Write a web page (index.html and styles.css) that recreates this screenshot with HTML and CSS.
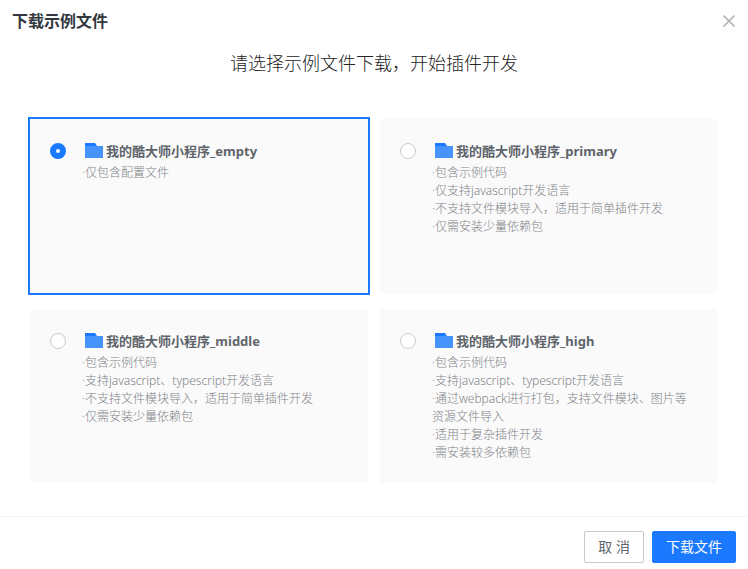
FILE: index.html
```html
<!DOCTYPE html>
<html lang="zh-CN">
<head>
    <meta charset="UTF-8">
    <meta name="viewport" content="width=device-width, initial-scale=1.0">
    <title>下载示例文件</title>
    <link rel="stylesheet" href="styles.css">
</head>
<body>

    <svg class="sprite" aria-hidden="true">
        <symbol id="folder" viewBox="0 0 18 16">
            <path fill="#1a79ff" d="M0 0h10l2 3v4H0z"/>
            <path fill="#4793fc" d="M0 3h18v12H0z"/>
        </symbol>
    </svg>

    <form class="dialog">
        <div class="dialog-header">
            <h1>下载示例文件</h1>
            <button type="button" class="close-btn" aria-label="关闭">
                <svg width="12" height="12" viewBox="0 0 12 12" aria-hidden="true">
                    <path d="M1 1l10 10M11 1L1 11" fill="none" stroke="#acb1b6" stroke-width="1.6" stroke-linecap="round"/>
                </svg>
            </button>
        </div>

        <h2 class="subtitle">请选择示例文件下载，开始插件开发</h2>

        <!-- Sample file options -->
        <div class="options">
            <label class="option">
                <input type="radio" name="sample" value="empty" checked>
                <span class="option-body">
                    <span class="option-title"><svg class="folder" aria-hidden="true"><use href="#folder"/></svg>我的酷大师小程序_empty</span>
                    <span class="line">·仅包含配置文件</span>
                </span>
            </label>

            <label class="option">
                <input type="radio" name="sample" value="primary">
                <span class="option-body">
                    <span class="option-title"><svg class="folder" aria-hidden="true"><use href="#folder"/></svg>我的酷大师小程序_primary</span>
                    <span class="line">·包含示例代码</span>
                    <span class="line">·仅支持javascript开发语言</span>
                    <span class="line">·不支持文件模块导入，适用于简单插件开发</span>
                    <span class="line">·仅需安装少量依赖包</span>
                </span>
            </label>

            <label class="option">
                <input type="radio" name="sample" value="middle">
                <span class="option-body">
                    <span class="option-title"><svg class="folder" aria-hidden="true"><use href="#folder"/></svg>我的酷大师小程序_middle</span>
                    <span class="line">·包含示例代码</span>
                    <span class="line">·支持javascript、typescript开发语言</span>
                    <span class="line">·不支持文件模块导入，适用于简单插件开发</span>
                    <span class="line">·仅需安装少量依赖包</span>
                </span>
            </label>

            <label class="option">
                <input type="radio" name="sample" value="high">
                <span class="option-body">
                    <span class="option-title"><svg class="folder" aria-hidden="true"><use href="#folder"/></svg>我的酷大师小程序_high</span>
                    <span class="line">·包含示例代码</span>
                    <span class="line">·支持javascript、typescript开发语言</span>
                    <span class="line">·通过webpack进行打包，支持文件模块、图片等资源文件导入</span>
                    <span class="line">·适用于复杂插件开发</span>
                    <span class="line">·需安装较多依赖包</span>
                </span>
            </label>
        </div>

        <div class="dialog-footer">
            <button type="button" class="btn">取 消</button>
            <button type="submit" class="btn btn-primary">下载文件</button>
        </div>
    </form>

</body>
</html>
```
FILE: styles.css
```css
* {
    box-sizing: border-box;
}
body {
    margin: 0;
    background-color: white;
    font-family: "Noto Sans", "Noto Sans CJK SC", sans-serif;
    color: #33383e;
}
.sprite {
    display: none;
}
.dialog {
    display: flex;
    flex-direction: column;
    min-height: 100vh;
}
.dialog-header {
    display: flex;
    align-items: center;
    justify-content: space-between;
    height: 42px;
    padding: 0 13px 0 12px;
}
.dialog-header h1 {
    margin: 0;
    font-size: 16px;
    line-height: 24px;
}
.close-btn {
    display: flex;
    padding: 0;
    border: none;
    background: none;
    cursor: pointer;
}
.subtitle {
    margin: 7px 0 0;
    font-size: 18px;
    font-weight: 300;
    line-height: 28px;
    text-align: center;
    color: #222;
}
.options {
    display: grid;
    grid-template-columns: 1fr 1fr;
    gap: 16px 12px;
    padding: 42px 30px 33px;
}
.option {
    display: flex;
    align-items: flex-start;
    gap: 16px;
    min-height: 174px;
    padding: 20px;
    border-radius: 4px;
    background-color: #fafafa;
    cursor: pointer;
}
.option:has(input:checked) {
    border-radius: 0;
    box-shadow: 0 0 0 2px #1a79ff;
}
.option input {
    appearance: none;
    flex: none;
    width: 16px;
    height: 16px;
    margin: 4px 0;
    border: 1px solid #c8cacf;
    border-radius: 50%;
    background-color: white;
}
.option input:checked {
    border: 6px solid #1a79ff;
}
.option-body {
    flex: 1;
    font-size: 12px;
    font-weight: 300;
    line-height: 18px;
    color: #808388;
}
.option-title {
    display: flex;
    align-items: center;
    gap: 3px;
    margin-bottom: 1px;
    padding-left: 3px;
    font-size: 13px;
    font-weight: bold;
    line-height: 24px;
    color: #5f646b;
}
.folder {
    width: 18px;
    height: 16px;
}
.line {
    display: block;
}
.dialog-footer {
    display: flex;
    justify-content: flex-end;
    gap: 8px;
    margin-top: auto;
    padding: 14px 12px 6px;
    border-top: 1px solid #f0f1f2;
}
.btn {
    height: 32px;
    padding: 0 13px 2px;
    border: 1px solid #c8cacf;
    border-radius: 2px;
    background-color: white;
    font-family: inherit;
    font-size: 14px;
    color: #5f646b;
    cursor: pointer;
}
.btn-primary {
    border-color: #1a79ff;
    background-color: #1a79ff;
    color: white;
}
```
